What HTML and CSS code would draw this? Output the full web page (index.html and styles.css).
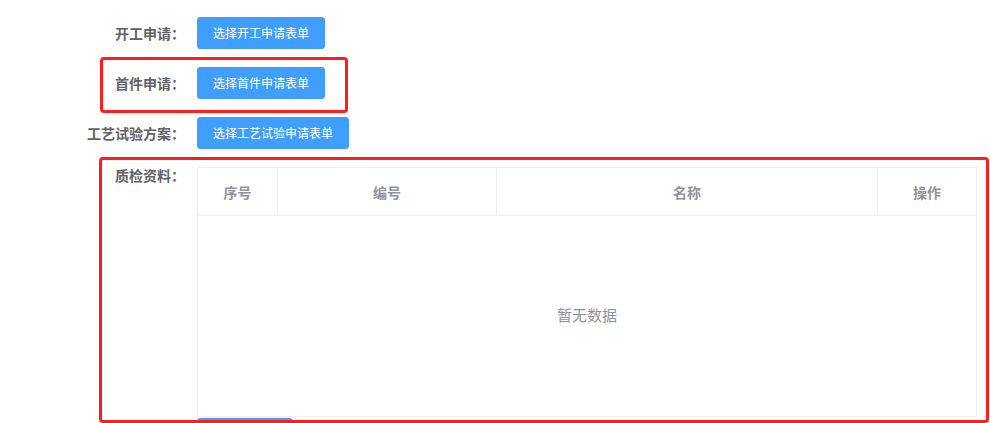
FILE: index.html
```html
<!DOCTYPE html>
<html lang="zh-CN">
<head>
<meta charset="utf-8">
<title>申请表单</title>
<link rel="stylesheet" href="styles.css">
</head>
<body>
<div class="page">
  <form class="form">
    <div class="form-item">
      <label class="form-label">开工申请：</label>
      <div class="form-content"><button type="button" class="btn">选择开工申请表单</button></div>
    </div>
    <div class="form-item">
      <label class="form-label">首件申请：</label>
      <div class="form-content"><button type="button" class="btn">选择首件申请表单</button></div>
    </div>
    <div class="form-item">
      <label class="form-label">工艺试验方案：</label>
      <div class="form-content"><button type="button" class="btn">选择工艺试验申请表单</button></div>
    </div>
    <div class="form-item form-item-top">
      <label class="form-label form-label-top">质检资料：</label>
      <div class="form-content">
        <div class="table">
          <div class="thead">
            <div class="th col-1">序号</div>
            <div class="th col-2">编号</div>
            <div class="th col-3">名称</div>
            <div class="th col-4">操作</div>
          </div>
          <div class="tbody">
            <span class="empty-text">暂无数据</span>
          </div>
        </div>
        <button type="button" class="btn btn-add" aria-label="上传资料"></button>
      </div>
    </div>
  </form>
  <div class="mark mark-1"></div>
  <div class="mark mark-2"></div>
</div>
</body>
</html>
```

FILE: styles.css
```css
html, body {
  margin: 0;
  padding: 0;
  overflow: hidden;
  background: #ffffff;
}

body {
  font-family: "Noto Sans CJK SC", "Noto Sans", sans-serif;
  color: #606266;
}

.page {
  position: relative;
  width: 990px;
  height: 423px;
  overflow: hidden;
}

.form {
  display: flex;
  flex-direction: column;
  gap: 18px;
  padding-top: 17px;
}

.form-item {
  display: flex;
  align-items: center;
}

.form-item-top {
  align-items: flex-start;
}

.form-label {
  box-sizing: border-box;
  width: 197px;
  padding-right: 12px;
  text-align: right;
  font-size: 14px;
  font-weight: bold;
  line-height: 32px;
  color: #606266;
}

.form-label-top {
  line-height: 16px;
}

.form-content {
  display: flex;
  flex-direction: column;
  align-items: flex-start;
}

.btn {
  box-sizing: border-box;
  height: 32px;
  padding: 0 15px;
  border: 1px solid #409eff;
  border-radius: 3px;
  background: #409eff;
  color: #ffffff;
  font-family: inherit;
  font-size: 12px;
  line-height: 30px;
  cursor: pointer;
  white-space: nowrap;
}

.btn-add {
  width: 96px;
  margin-top: 1px;
}

.table {
  box-sizing: border-box;
  width: 780px;
  height: 250px;
  border: 1px solid #ebeef5;
  display: flex;
  flex-direction: column;
}

.thead {
  display: flex;
  height: 47px;
  border-bottom: 1px solid #ebeef5;
  flex: none;
}

.th {
  box-sizing: border-box;
  display: flex;
  align-items: center;
  justify-content: center;
  font-size: 14px;
  font-weight: bold;
  color: #909399;
  border-right: 1px solid #ebeef5;
}

.th:last-child {
  border-right: none;
}

.col-1 { width: 80px; }
.col-2 { width: 219px; }
.col-3 { width: 381px; }
.col-4 { flex: 1; }

.tbody {
  flex: 1;
  display: flex;
  align-items: center;
  justify-content: center;
  padding-bottom: 3px;
}

.empty-text {
  font-size: 15px;
  color: #909399;
}

.mark {
  position: absolute;
  box-sizing: border-box;
  border: 3px solid #ff1e1e;
  border-radius: 4px;
  pointer-events: none;
}

.mark-1 {
  left: 100px;
  top: 57px;
  width: 248px;
  height: 56px;
}

.mark-2 {
  left: 99px;
  top: 157px;
  width: 890px;
  height: 266px;
}
```
